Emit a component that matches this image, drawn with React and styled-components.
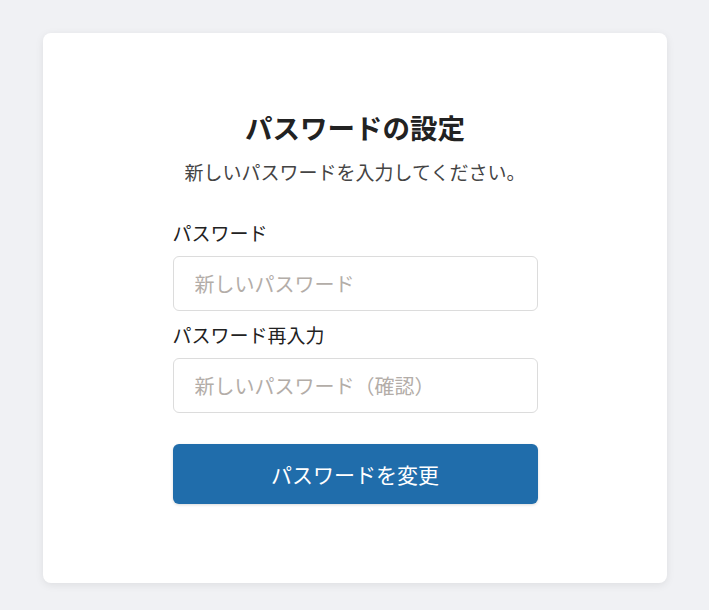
import React from "react";
import styled, { createGlobalStyle } from "styled-components";

const GlobalStyle = createGlobalStyle`
  body {
    margin: 0;
    background: #f0f1f4;
    font-family: "Noto Sans CJK JP", "Noto Sans", sans-serif;
    color: #222;
  }
`;

function App() {
  return (
    <>
      <GlobalStyle />
      <Page>
        <Card>
          <Form onSubmit={(e) => e.preventDefault()}>
            <Title>パスワードの設定</Title>
            <Lead>新しいパスワードを入力してください。</Lead>

            <Field>
              <Label htmlFor="pw">パスワード</Label>
              <Input id="pw" type="password" placeholder="新しいパスワード" />
            </Field>
            <Field>
              <Label htmlFor="pw2">パスワード再入力</Label>
              <Input
                id="pw2"
                type="password"
                placeholder="新しいパスワード（確認）"
              />
            </Field>

            <Button type="submit">パスワードを変更</Button>
          </Form>
        </Card>
      </Page>
    </>
  );
}

const Page = styled.div`
  padding: 33px 42px 27px 43px;
`;

const Card = styled.div`
  background: #fff;
  border-radius: 8px;
  box-shadow: 0 2px 8px rgba(0, 0, 0, 0.08);
  height: 550px;
  box-sizing: border-box;
  padding-top: 75px;
  display: flex;
  justify-content: center;
`;

const Form = styled.form`
  width: 365px;
  display: flex;
  flex-direction: column;
`;

const Title = styled.h1`
  margin: 0;
  font-size: 27.5px;
  line-height: 38px;
  font-weight: 700;
  text-align: center;
  color: #222;
`;

const Lead = styled.p`
  margin: 12px 0 0;
  font-size: 19px;
  line-height: 28px;
  text-align: center;
  color: #444;
`;

const Field = styled.div`
  display: flex;
  flex-direction: column;
  gap: 9px;
  margin-top: 33px;

  & + & {
    margin-top: 10px;
  }
`;

const Label = styled.label`
  font-size: 19px;
  line-height: 28px;
  color: #222;
`;

const Input = styled.input`
  box-sizing: border-box;
  height: 55px;
  width: 100%;
  padding: 0 21px;
  border: 1px solid #dcdcdc;
  border-radius: 6px;
  font-family: inherit;
  font-size: 20px;
  color: #222;
  outline: none;

  &::placeholder {
    color: #b3ada8;
  }
`;

const Button = styled.button`
  margin-top: 31px;
  height: 60px;
  border: none;
  border-radius: 6px;
  background: #206dab;
  color: #fff;
  font-family: inherit;
  font-size: 21px;
  box-shadow: 0 1px 3px rgba(0, 0, 0, 0.15);
  cursor: pointer;
`;

export default App;
